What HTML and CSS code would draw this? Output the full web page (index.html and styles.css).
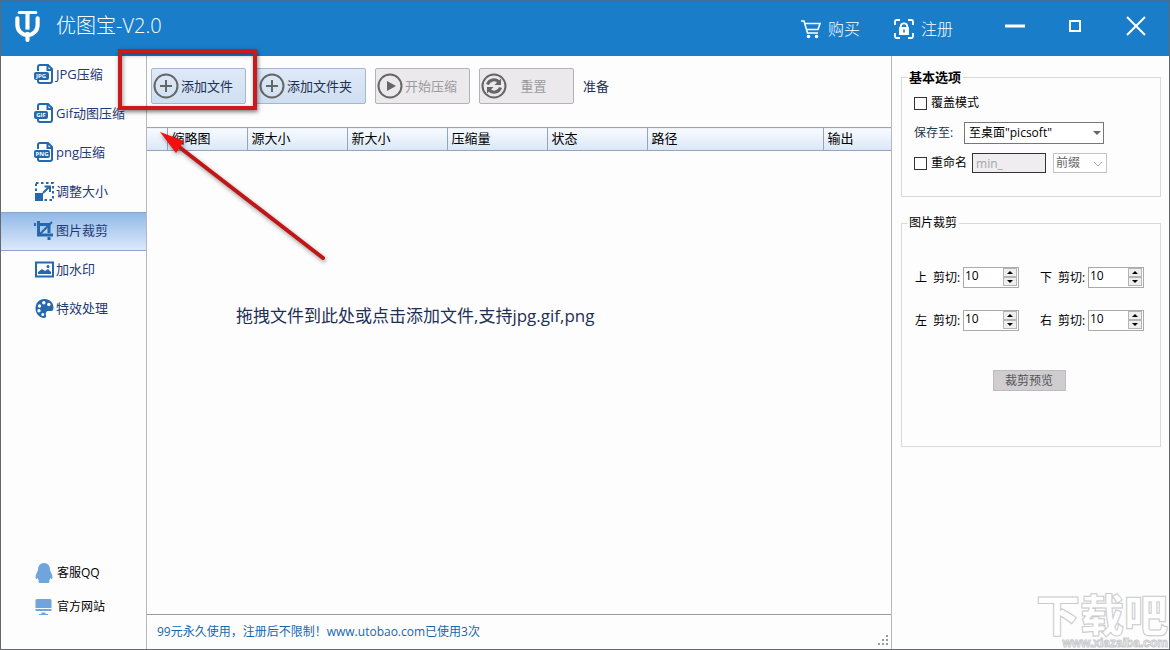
FILE: index.html
```html
<!DOCTYPE html>
<html lang="zh-CN">
<head>
    <meta charset="UTF-8">
    <meta name="viewport" content="width=device-width, initial-scale=1.0">
    <title>优图宝-V2.0</title>
    <link rel="stylesheet" href="styles.css">
</head>
<body>
    <div class="window">
        <header class="titlebar">
            <svg class="logo" viewBox="0 0 24 30" fill="none" stroke="#fff">
                <path d="M4 1.500h16" stroke-width="3" stroke-linecap="round"/>
                <path d="M12 2v16" stroke-width="4"/>
                <path d="M2.200 7v6.500a9.800 9.800 0 0 0 19.600 0V7" stroke-width="4" stroke-linecap="round"/>
                <path d="M12 22v6" stroke-width="4" stroke-linecap="round"/>
            </svg>
            <h1 class="app-name">优图宝-V2.0</h1>
            <a class="title-link" href="#buy">
                <svg class="title-icon" viewBox="0 0 22 20" fill="none" stroke="#fff" stroke-width="1.600">
                    <path d="M1 2h3l3.500 12H18"/>
                    <path d="M4.800 4.500H20L18 10.500H6.500"/>
                    <circle cx="8.500" cy="17.500" r="1" fill="#fff"/>
                    <circle cx="16.500" cy="17.500" r="1" fill="#fff"/>
                </svg>
                <span>购买</span>
            </a>
            <a class="title-link" href="#register">
                <svg class="title-icon" viewBox="0 0 22 20" fill="none" stroke="#fff" stroke-width="1.800">
                    <path d="M2 6V2.500Q2 1 3.500 1H7M15 1h3.500Q20 1 20 2.500V6M20 14v3.500q0 1.500-1.500 1.500H15M7 19H3.500Q2 19 2 17.500V14"/>
                    <path d="M7.800 9V7.500a3.200 3.200 0 0 1 6.400 0V9"/>
                    <path d="M7 9h8v6H7z" fill="#fff"/>
                    <path d="M11 10.500v3" stroke="#197dca" stroke-width="1.600"/>
                </svg>
                <span>注册</span>
            </a>
            <div class="window-buttons">
                <button type="button" aria-label="最小化"><svg viewBox="0 0 20 20"><path d="M0 10h20" stroke-width="3"/></svg></button>
                <button type="button" aria-label="最大化"><svg viewBox="0 0 20 20"><path d="M5 5h10v10H5z" stroke-width="2"/></svg></button>
                <button type="button" aria-label="关闭"><svg viewBox="0 0 20 20"><path d="M1 1l18 18M19 1L1 19" stroke-width="2"/></svg></button>
            </div>
        </header>

        <div class="content">
            <nav class="sidebar">
                <a class="nav-item" href="#jpg">
                    <svg class="nav-icon" viewBox="0 0 20 20">
                        <path class="line" d="M4 7V3q0-2 2-2h8l4 4v12q0 2-2 2H6q-2 0-2-2v-1M13.500 1v5H18"/>
                        <rect x="0" y="8" width="15" height="8" rx="2"/>
                        <text x="7" y="14">JPG</text>
                    </svg>
                    <span>JPG压缩</span>
                </a>
                <a class="nav-item" href="#gif">
                    <svg class="nav-icon" viewBox="0 0 20 20">
                        <path class="line" d="M4 7V3q0-2 2-2h8l4 4v12q0 2-2 2H6q-2 0-2-2v-1M13.500 1v5H18"/>
                        <rect x="0" y="8" width="14" height="8" rx="2"/>
                        <text x="7" y="14">GIF</text>
                    </svg>
                    <span>Gif动图压缩</span>
                </a>
                <a class="nav-item" href="#png">
                    <svg class="nav-icon" viewBox="0 0 20 20">
                        <path class="line" d="M4 7V3q0-2 2-2h8l4 4v12q0 2-2 2H6q-2 0-2-2v-1M13.500 1v5H18"/>
                        <rect x="0" y="8" width="16" height="8" rx="2"/>
                        <text x="8" y="14">PNG</text>
                    </svg>
                    <span>png压缩</span>
                </a>
                <a class="nav-item" href="#resize">
                    <svg class="nav-icon" viewBox="0 0 20 20">
                        <path class="line" d="M2 2h17v17H2z" stroke-dasharray="2.500 2.500"/>
                        <rect x="1" y="12" width="8" height="8"/>
                        <path class="line" d="M9 12l6-6M10.500 5.500H16V11"/>
                    </svg>
                    <span>调整大小</span>
                </a>
                <a class="nav-item active" href="#crop">
                    <svg class="nav-icon" viewBox="0 0 20 20">
                        <path class="line bold" d="M4.500 1v14H19M0 4.500h2M6 4.500h9V13M15 17v3"/>
                        <path class="line" d="M5 15L18 2"/>
                    </svg>
                    <span>图片裁剪</span>
                </a>
                <a class="nav-item" href="#watermark">
                    <svg class="nav-icon" viewBox="0 0 20 20">
                        <path class="line" d="M2 3.500h17v14H2z"/>
                        <path d="M4 15v-2l4-3 3 2 3-2 3 3v2z"/>
                        <circle cx="14" cy="7.500" r="1.500"/>
                    </svg>
                    <span>加水印</span>
                </a>
                <a class="nav-item" href="#effects">
                    <svg class="nav-icon" viewBox="0 0 20 20">
                        <path d="M10.500 1C5 1 1.500 5 1.500 10.500S6 20 10 20c2 0 2.500-1.500 2-3s0-4 2.500-4c2 0 5 1 5-3C19.500 4.500 16 1 10.500 1z"/>
                        <g fill="#fff">
                            <circle cx="5.500" cy="8" r="1.700"/><circle cx="9.800" cy="4.800" r="1.700"/>
                            <circle cx="14.800" cy="6.500" r="1.700"/><circle cx="5" cy="12.800" r="1.700"/>
                            <circle cx="8.800" cy="16.500" r="1.500"/>
                        </g>
                    </svg>
                    <span>特效处理</span>
                </a>

                <div class="contact">
                    <a class="contact-item" href="#qq">
                        <svg class="contact-icon" viewBox="0 0 18 20">
                            <path d="M9 0c4 0 6 3 6 6.500 0 2 2.500 4.500 2.500 8 0 1.500-1 2-2 .5-.3 1-.8 2-1.500 2.600 1 .4 1 2.400-1 2.400H10H8 5c-2 0-2-2-1-2.400C3.300 17 2.800 16 2.500 15c-1 1.500-2 1-2-.5C.5 11 3 8.500 3 6.500 3 3 5 0 9 0z"/>
                        </svg>
                        <span>客服QQ</span>
                    </a>
                    <a class="contact-item" href="#site">
                        <svg class="contact-icon" viewBox="0 0 18 20">
                            <path d="M2 2h13q1.500 0 1.500 1.500V11h-16V3.500Q.5 2 2 2zM.5 12h16v1.500Q16.500 14 15 14H2Q.5 14 .5 13.500zM6.500 15.500h4V17H13v1H4v-1h2.500z"/>
                        </svg>
                        <span>官方网站</span>
                    </a>
                </div>
            </nav>

            <main class="main">
                <div class="toolbar">
                    <button class="tool-btn" type="button">
                        <svg class="tool-icon" viewBox="0 0 26 26"><circle cx="13" cy="13" r="11.500"/><path d="M7 13h12M13 7v12"/></svg>
                        <span>添加文件</span>
                    </button>
                    <button class="tool-btn wide" type="button">
                        <svg class="tool-icon" viewBox="0 0 26 26"><circle cx="13" cy="13" r="11.500"/><path d="M7 13h12M13 7v12"/></svg>
                        <span>添加文件夹</span>
                    </button>
                    <button class="tool-btn" type="button" disabled>
                        <svg class="tool-icon" viewBox="0 0 26 26"><circle cx="13" cy="13" r="11.500"/><path class="solid" d="M10 8l9 5-9 5z"/></svg>
                        <span>开始压缩</span>
                    </button>
                    <button class="tool-btn" type="button" disabled>
                        <svg class="tool-icon" viewBox="0 0 26 26">
                            <circle cx="13" cy="13" r="11.500"/>
                            <path class="thick" d="M6.500 11.500a6.500 6.500 0 0 1 11.500-2M19.500 14.500a6.500 6.500 0 0 1-11.500 2"/>
                            <path class="solid" d="M20 5.500v6.500h-6.500zM6 20.500V14h6.500z"/>
                        </svg>
                        <span class="btn-label">重置</span>
                    </button>
                    <span class="state">准备</span>
                </div>

                <table class="file-table">
                    <thead>
                        <tr>
                            <th class="col-check"></th>
                            <th class="col-thumb">缩略图</th>
                            <th class="col-size">源大小</th>
                            <th class="col-size">新大小</th>
                            <th class="col-size">压缩量</th>
                            <th class="col-size">状态</th>
                            <th>路径</th>
                            <th class="col-out">输出</th>
                        </tr>
                    </thead>
                </table>

                <div class="drop-zone">拖拽文件到此处或点击添加文件,支持jpg.gif,png</div>

                <footer class="statusbar">
                    <span>99元永久使用，注册后不限制！www.utobao.com已使用3次</span>
                    <svg class="grip" viewBox="0 0 11 11"><path d="M8 0h2v2H8zM4 4h2v2H4zM8 4h2v2H8zM0 8h2v2H0zM4 8h2v2H4zM8 8h2v2H8z"/></svg>
                </footer>
            </main>

            <aside class="options">
                <fieldset class="group">
                    <legend class="strong">基本选项</legend>
                    <div class="rows">
                        <label class="row"><input class="check" type="checkbox"><span>覆盖模式</span></label>
                        <div class="row">
                            <label class="save-label" for="saveTo">保存至:</label>
                            <span class="select-box save-to">
                                <select id="saveTo"><option>至桌面"picsoft"</option></select>
                                <svg viewBox="0 0 8 8"><path d="M0 2h8L4 6z" fill="#666"/></svg>
                            </span>
                        </div>
                        <div class="row">
                            <input class="check" type="checkbox" id="rename">
                            <label for="rename">重命名</label>
                            <input class="prefix" type="text" value="min_" aria-label="重命名文字" disabled>
                            <span class="select-box position">
                                <select aria-label="位置" disabled><option>前缀</option></select>
                                <svg viewBox="0 0 8 8"><path d="M0 2l4 4 4-4" fill="none" stroke="#aaa"/></svg>
                            </span>
                        </div>
                    </div>
                </fieldset>

                <fieldset class="group crop">
                    <legend>图片裁剪</legend>
                    <div class="crop-grid">
                        <div class="crop-field">
                            <label for="cropTop"><span>上</span> <span>剪切:</span></label>
                            <div class="spinner">
                                <input type="text" inputmode="numeric" id="cropTop" value="10">
                                <button class="up" type="button" aria-label="增加"></button>
                                <button class="down" type="button" aria-label="减少"></button>
                            </div>
                        </div>
                        <div class="crop-field">
                            <label for="cropBottom"><span>下</span> <span>剪切:</span></label>
                            <div class="spinner">
                                <input type="text" inputmode="numeric" id="cropBottom" value="10">
                                <button class="up" type="button" aria-label="增加"></button>
                                <button class="down" type="button" aria-label="减少"></button>
                            </div>
                        </div>
                        <div class="crop-field">
                            <label for="cropLeft"><span>左</span> <span>剪切:</span></label>
                            <div class="spinner">
                                <input type="text" inputmode="numeric" id="cropLeft" value="10">
                                <button class="up" type="button" aria-label="增加"></button>
                                <button class="down" type="button" aria-label="减少"></button>
                            </div>
                        </div>
                        <div class="crop-field">
                            <label for="cropRight"><span>右</span> <span>剪切:</span></label>
                            <div class="spinner">
                                <input type="text" inputmode="numeric" id="cropRight" value="10">
                                <button class="up" type="button" aria-label="增加"></button>
                                <button class="down" type="button" aria-label="减少"></button>
                            </div>
                        </div>
                    </div>
                    <button class="preview-btn" type="button">裁剪预览</button>
                </fieldset>
            </aside>
        </div>

        <!-- callout over the add-file button -->
        <div class="highlight"></div>
        <svg class="arrow" viewBox="0 0 180 140">
            <path d="M19 16L168 131" stroke="#c01616" stroke-width="4" stroke-linecap="round"/>
            <path d="M5 5l24 9-8 12z" fill="#f01010"/>
        </svg>

        <div class="site-mark">
            <span class="mark-name">下载吧</span>
            <span class="mark-url">www.xiazaiba.com</span>
        </div>
    </div>
</body>
</html>
```

FILE: styles.css
```css
* {
    margin: 0;
    padding: 0;
    box-sizing: border-box;
}

body {
    background: #fdfdfe;
    color: #000;
    font-family: "Open Sans", "Noto Sans CJK SC", sans-serif;
    font-size: 13px;
    line-height: 18px;
}

button, input, select {
    font: inherit;
    color: inherit;
}

a {
    color: inherit;
    text-decoration: none;
}

.window {
    position: relative;
    display: flex;
    flex-direction: column;
    height: 100vh;
    border: 1px solid #66686c;
    border-top-color: #416f98;
    overflow: hidden;
}

/* title bar */
.titlebar {
    display: flex;
    align-items: center;
    flex: none;
    height: 55px;
    padding: 0 22px 5px 14px;
    background: #197dca;
    color: #fff;
}

.logo {
    width: 25px;
    height: 31px;
    margin-right: 16px;
}

.app-name {
    flex: 1;
    font-size: 20px;
    font-weight: 300;
    line-height: 28px;
}

.title-link {
    display: flex;
    align-items: center;
    gap: 6px;
    margin-right: 33px;
    padding-top: 6px;
    font-size: 16px;
    font-weight: 300;
}

.title-icon {
    width: 22px;
    height: 20px;
}

.window-buttons {
    display: flex;
    gap: 40px;
    margin-left: 19px;
}

.window-buttons button {
    width: 20px;
    height: 20px;
    border: none;
    background: none;
}

.window-buttons button + button {
    margin-right: 1px;
}

.window-buttons svg {
    display: block;
    fill: none;
    stroke: #fff;
}

.content {
    display: grid;
    grid-template-columns: 146px 1fr 278px;
    flex: 1;
    min-height: 0;
}

/* left navigation */
.sidebar {
    display: flex;
    flex-direction: column;
    border-right: 1px solid #b4b8bd;
}

.nav-item {
    display: flex;
    align-items: center;
    gap: 2px;
    height: 39px;
    padding: 0 0 3px 33px;
    color: #1f3a74;
    white-space: nowrap;
}

.nav-item.active {
    background: linear-gradient(#91b9e8, #dbe9fa);
    border-top: 1px solid #8ba5c4;
    border-bottom: 1px solid #8ba5c4;
}

.nav-icon {
    width: 20px;
    height: 20px;
    fill: #2468ae;
}

.nav-icon .line {
    fill: none;
    stroke: #2468ae;
    stroke-width: 2;
}

.nav-icon .bold {
    stroke-width: 3;
}

.nav-icon text {
    fill: #fff;
    font-size: 6px;
    font-weight: bold;
    text-anchor: middle;
}

.contact {
    margin-top: auto;
    padding-bottom: 25px;
    font-size: 12px;
}

.contact-item {
    display: flex;
    align-items: center;
    gap: 4px;
    height: 34px;
    padding-left: 34px;
}

.contact-icon {
    width: 18px;
    height: 20px;
    fill: #6fa5dc;
}

/* centre */
.main {
    display: flex;
    flex-direction: column;
    min-width: 0;
}

.toolbar {
    display: flex;
    gap: 9px;
    padding: 12px 4px 23px;
}

.tool-btn {
    display: flex;
    align-items: center;
    gap: 2px;
    width: 95px;
    height: 36px;
    padding: 0 1px 1px;
    border: 1px solid #a3b7d0;
    border-radius: 2px;
    background: linear-gradient(#dfe9f7, #cfdff1);
    color: #1e2f55;
    white-space: nowrap;
}

.tool-btn.wide {
    width: 111px;
    padding-left: 3px;
}

.tool-btn:disabled {
    border-color: #b3b3b6;
    background: #ebe9eb;
    color: #9b9b9e;
}

.tool-icon {
    flex: none;
    width: 26px;
    height: 26px;
    fill: none;
    stroke: #666;
    stroke-width: 2;
}

.tool-icon .solid {
    fill: #666;
    stroke: none;
}

.tool-icon .thick {
    stroke-width: 3;
}

.btn-label {
    flex: 1;
    padding-right: 14px;
    text-align: center;
}

.state {
    align-self: center;
    color: #1e2f55;
}

.file-table {
    width: 100%;
    table-layout: fixed;
    border-collapse: collapse;
}

.file-table th {
    height: 23px;
    padding: 0 4px 3px;
    border: 1px solid #93a5bd;
    border-left: none;
    background: linear-gradient(#f8fbff, #dbe7f7);
    font-weight: normal;
    line-height: 18px;
    text-align: left;
}

.file-table th:last-child {
    border-right: none;
}

.file-table .col-check {
    width: 20px;
}

.file-table .col-thumb {
    width: 80px;
}

.file-table .col-size {
    width: 100px;
}

.file-table .col-out {
    width: 68px;
}

.drop-zone {
    flex: 1;
    padding: 152px 20px 0 89px;
    color: #1e2f55;
    font-size: 17px;
    line-height: 26px;
}

.statusbar {
    display: flex;
    align-items: center;
    justify-content: space-between;
    height: 35px;
    padding-left: 10px;
    border-top: 1px solid #9a9a9a;
    color: #1767ab;
    font-size: 12px;
}

.grip {
    align-self: flex-end;
    width: 11px;
    height: 11px;
    margin: 3px 2px;
    fill: #999;
}

/* right panel */
.options {
    display: flex;
    flex-direction: column;
    gap: 17px;
    padding: 12px 8px 12px 9px;
    border-left: 1px solid #b4b8bd;
    font-size: 12px;
}

.group {
    min-width: 0;
    padding: 6px 10px 22px 12px;
    border: 1px solid #d9d9db;
}

.group legend {
    margin-left: -6px;
    padding: 0 2px 0 1px;
}

.group .strong {
    font-size: 13px;
    font-weight: bold;
}

.rows {
    display: grid;
    gap: 8px;
}

.row {
    display: flex;
    align-items: center;
    gap: 4px;
    height: 22px;
}

.check {
    appearance: none;
    width: 13px;
    height: 13px;
    border: 1px solid #333;
    background: #fff;
}

.save-label {
    width: 46px;
    color: #1f3a4c;
}

.select-box {
    position: relative;
    display: flex;
}

.select-box select {
    appearance: none;
    width: 100%;
    border: 1px solid #777;
    border-radius: 0;
    background: #fff;
    padding: 0 4px;
}

.select-box svg {
    position: absolute;
    top: 7px;
    right: 3px;
    width: 8px;
    height: 8px;
    pointer-events: none;
}

.save-to {
    width: 140px;
    height: 22px;
}

.position {
    width: 54px;
    height: 20px;
    margin-left: 3px;
}

.position select {
    border-color: #c4c4c6;
    padding: 0 2px;
    color: #666;
    opacity: 1;
}

.position svg {
    right: 5px;
}

.prefix {
    width: 74px;
    height: 20px;
    margin-left: 1px;
    border: 1px solid #333;
    background: #efedf0;
    color: #a5a5a8;
    padding: 0 3px;
}

.crop {
    padding: 35px 16px 55px 12px;
}

.crop-grid {
    display: grid;
    grid-template-columns: 125px 1fr;
    row-gap: 22px;
}

.crop-field {
    display: flex;
    align-items: center;
    white-space: nowrap;
}

.crop-field label {
    display: flex;
    gap: 6px;
    width: 49px;
    padding-left: 1px;
}

.spinner {
    display: grid;
    grid-template-columns: 1fr 15px;
    grid-template-rows: 9px 9px;
    width: 56px;
    height: 21px;
    border: 1px solid #aaa;
    background: #fff;
}

.spinner input {
    grid-row: 1 / 3;
    width: 100%;
    height: 16px;
    padding-left: 1px;
    border: none;
    background: none;
    outline: none;
}

.spinner button {
    display: flex;
    align-items: center;
    justify-content: center;
    width: 14px;
    border: 1px solid #b5b5b7;
    background: #eee;
}

.spinner button::before {
    content: "";
    border: 3px solid transparent;
}

.spinner .up::before {
    border-top: none;
    border-bottom-color: #000;
}

.spinner .down::before {
    border-bottom: none;
    border-top-color: #000;
}

.preview-btn {
    display: block;
    width: 73px;
    height: 21px;
    margin: 39px auto 0;
    border: 1px solid #bdbbbe;
    background: #cfcdd0;
    color: #555;
    line-height: 18px;
}

/* callout */
.highlight {
    position: absolute;
    top: 48px;
    left: 117px;
    width: 139px;
    height: 61px;
    border: 4px solid #cb1a1e;
    box-shadow: 1px 2px 4px rgba(0, 0, 0, 0.5), inset 1px 2px 4px rgba(0, 0, 0, 0.4);
    pointer-events: none;
}

.arrow {
    position: absolute;
    top: 126px;
    left: 154px;
    width: 180px;
    height: 140px;
    filter: drop-shadow(1px 2px 2px rgba(0, 0, 0, 0.4));
    pointer-events: none;
}

/* site mark in the corner */
.site-mark {
    position: absolute;
    right: 1px;
    bottom: 0;
    display: flex;
    flex-direction: column;
    align-items: flex-end;
    color: #fff;
    font-weight: bold;
    -webkit-text-stroke: 1px #cacacc;
    pointer-events: none;
}

.mark-name {
    font-size: 44px;
    line-height: 44px;
    font-weight: 900;
}

.mark-url {
    font-family: "Liberation Sans", sans-serif;
    font-size: 12px;
    line-height: 12px;
}
```
